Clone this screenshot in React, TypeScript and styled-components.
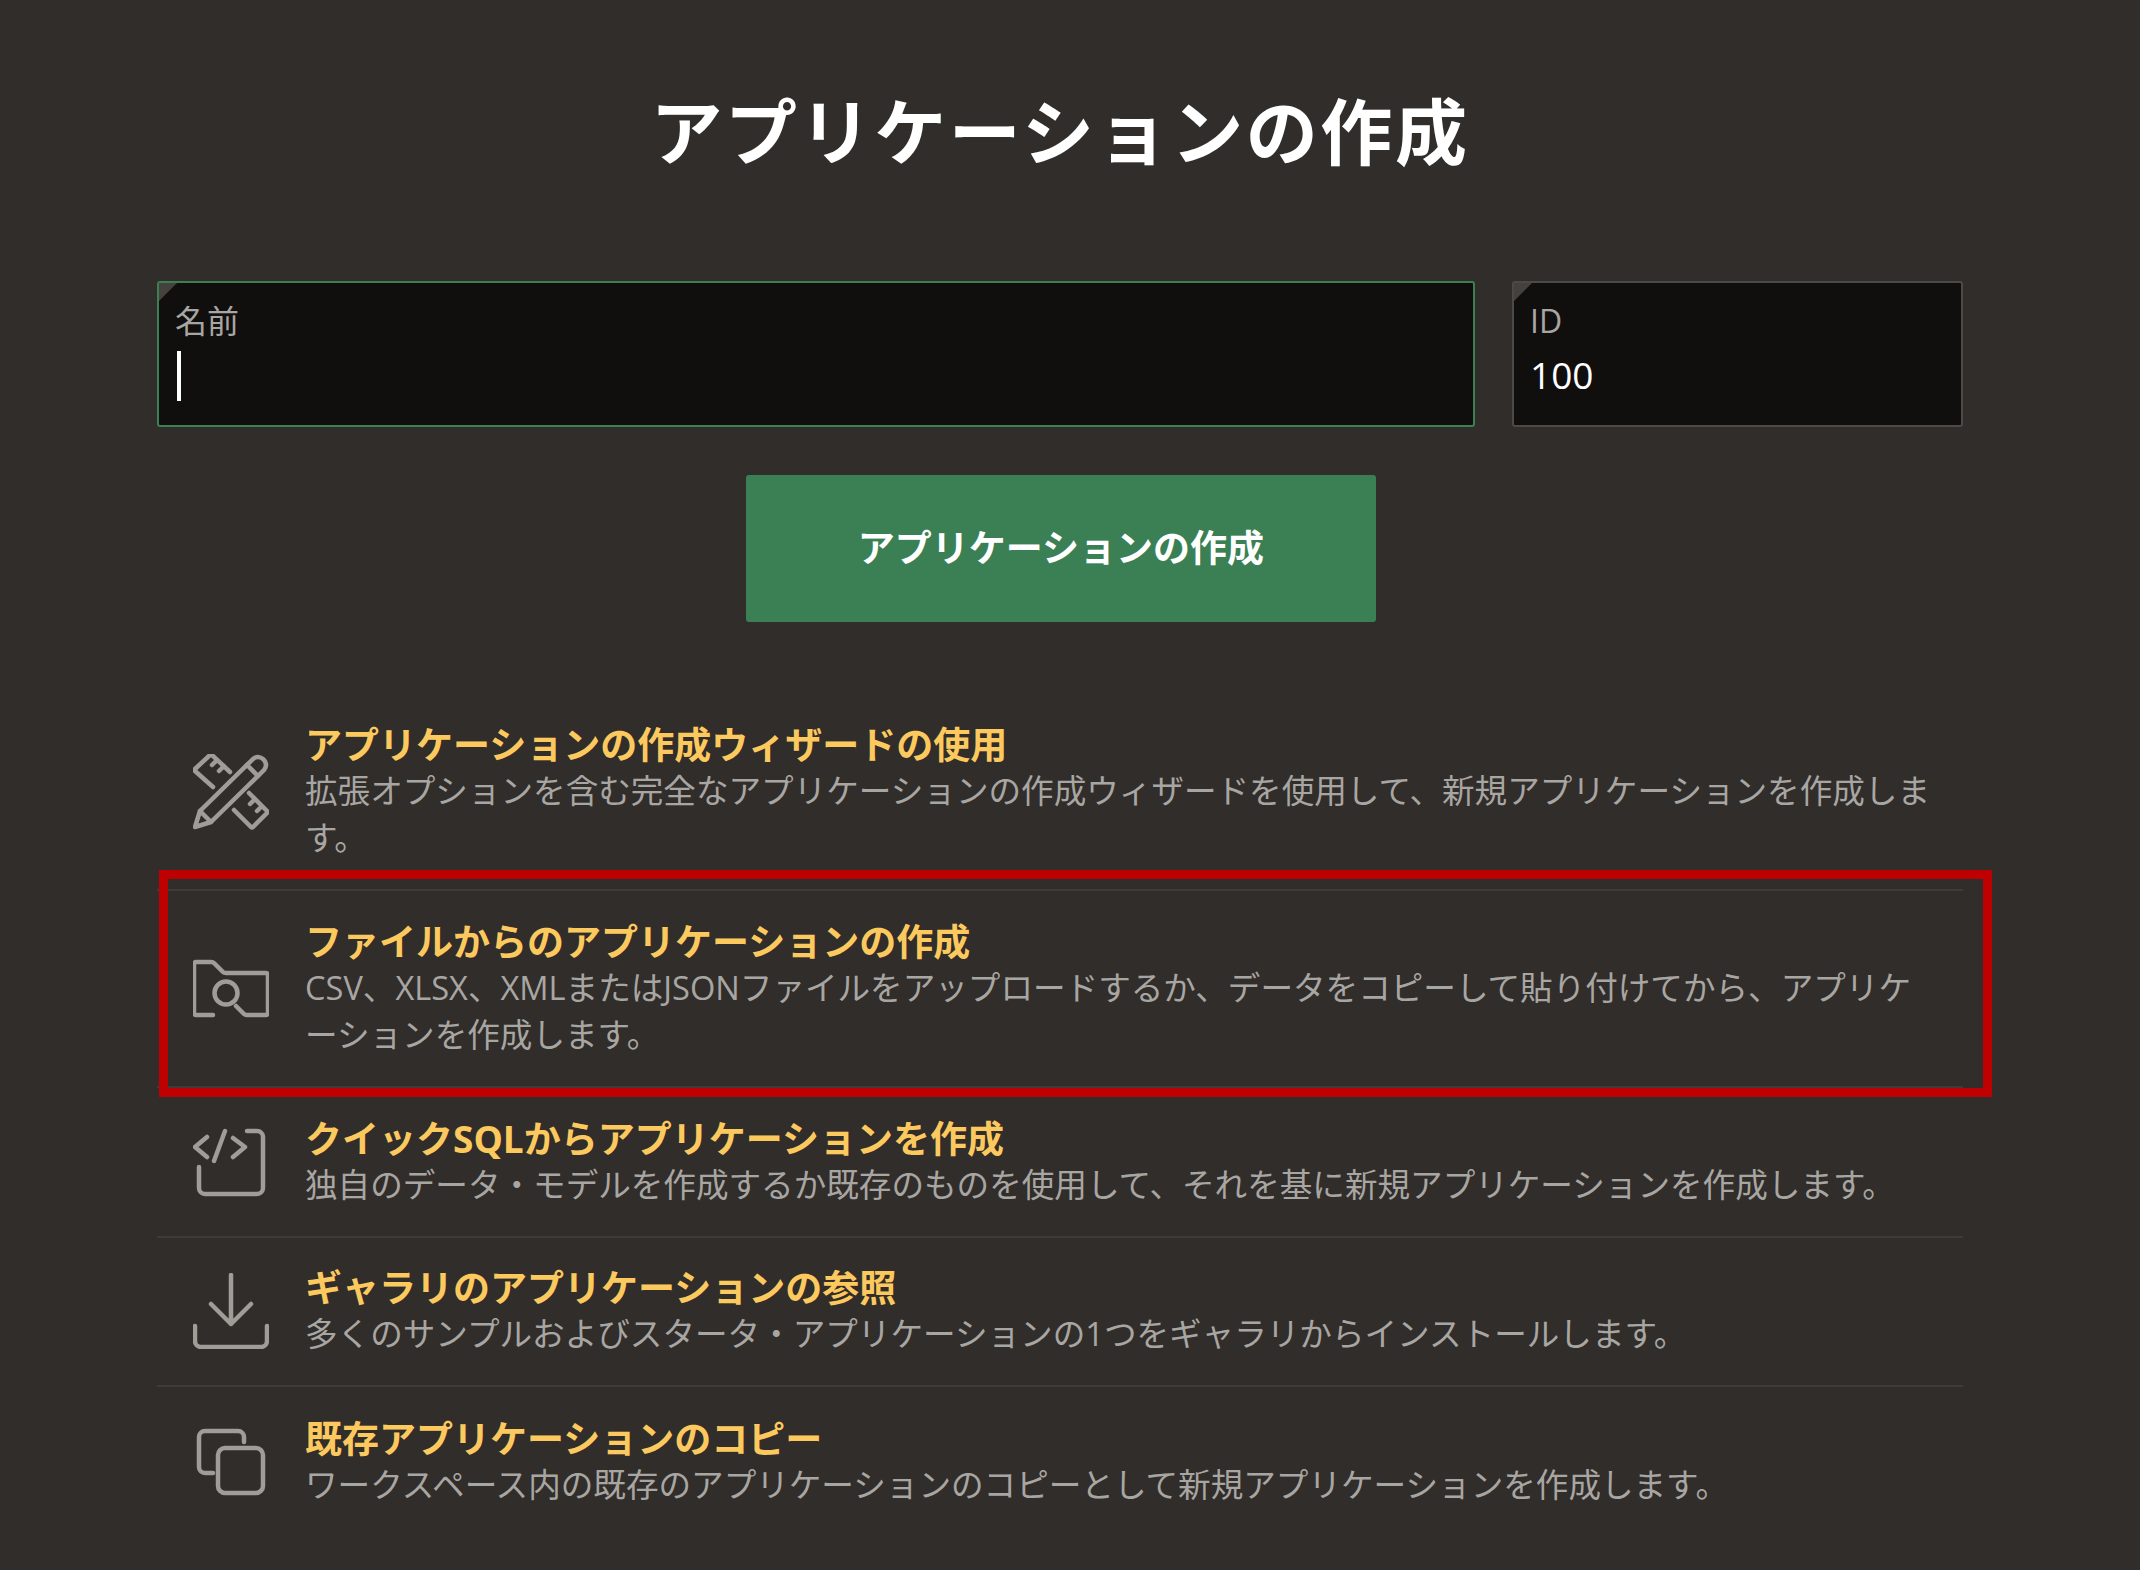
import { createGlobalStyle } from "styled-components";
import styled from "styled-components";
import type { ReactNode } from "react";

const GlobalStyle = createGlobalStyle`
  html, body {
    margin: 0;
    padding: 0;
    background: #312d2a;
  }
  body {
    font-family: "Open Sans", "Noto Sans CJK JP", sans-serif;
  }
`;

interface Action {
  title: string;
  description: string;
  icon: ReactNode;
  tall?: boolean;
}

const actions: Action[] = [
  {
    title: "アプリケーションの作成ウィザードの使用",
    description:
      "拡張オプションを含む完全なアプリケーションの作成ウィザードを使用して、新規アプリケーションを作成します。",
    tall: true,
    icon: (
      <Icon>
        <path d="M2 73l5-16L60 5q5-4 10 0l1 1q4 5 0 10L18 68z" />
        <path d="M7 57l11 11M54 11l11 11" />
        <path d="M20 33L2 17a1.5 1.5 0 0 1 0-2L17 1a1.5 1.5 0 0 1 2 0l18 17M24 6l-5 5M31 12l-5 5" />
        <path d="M41 56l17 17a1.5 1.5 0 0 0 2 0l14-14a1.5 1.5 0 0 0 0-2L56 39M62 45l-5 5M69 52l-5 5" />
      </Icon>
    ),
  },
  {
    title: "ファイルからのアプリケーションの作成",
    description:
      "CSV、XLSX、XMLまたはJSONファイルをアップロードするか、データをコピーして貼り付けてから、アプリケーションを作成します。",
    tall: true,
    icon: (
      <Icon>
        <path d="M20 64H3a2 2 0 0 1-2-2V13a2 2 0 0 1 2-2h15c1 0 2 0 3 1l9 9c1 1 2 1 3 1h40a2 2 0 0 1 2 2v38a2 2 0 0 1-2 2H54c-1 0-2 0-3-1l-8-8" />
        <circle cx="33" cy="42" r="11.5" />
      </Icon>
    ),
  },
  {
    title: "クイックSQLからアプリケーションを作成",
    description:
      "独自のデータ・モデルを作成するか既存のものを使用して、それを基に新規アプリケーションを作成します。",
    icon: (
      <Icon>
        <path d="M54 7h10a6 6 0 0 1 6 6v51a6 6 0 0 1-6 6H12a6 6 0 0 1-6-6V43" />
        <path d="M14 13L2 23l12 10M32 7L21 37M40 14l12 9-12 10" />
      </Icon>
    ),
  },
  {
    title: "ギャラリのアプリケーションの参照",
    description:
      "多くのサンプルおよびスタータ・アプリケーションの1つをギャラリからインストールします。",
    icon: (
      <Icon>
        <path d="M38 2v49M18 31l20 20 20-20" />
        <path d="M2 53v15a6 6 0 0 0 6 6h60a6 6 0 0 0 6-6V53" />
      </Icon>
    ),
  },
  {
    title: "既存アプリケーションのコピー",
    description:
      "ワークスペース内の既存のアプリケーションのコピーとして新規アプリケーションを作成します。",
    icon: (
      <Icon>
        <path d="M20 49h-8a6 6 0 0 1-6-6V13a6 6 0 0 1 6-6h33a6 6 0 0 1 6 6v5" />
        <rect x="25" y="24" width="45" height="45" rx="7" />
      </Icon>
    ),
  },
];

function Icon({ children }: { children: ReactNode }) {
  return (
    <IconSvg viewBox="0 0 76 76" fill="none">
      {children}
    </IconSvg>
  );
}

export default function App() {
  return (
    <Page>
      <GlobalStyle />
      <Title>アプリケーションの作成</Title>

      <Fields>
        <NameField>
          <FieldLabel>名前</FieldLabel>
          <Caret />
        </NameField>
        <IdField>
          <FieldLabel>ID</FieldLabel>
          <FieldValue>100</FieldValue>
        </IdField>
      </Fields>

      <ButtonRow>
        <CreateButton type="button">アプリケーションの作成</CreateButton>
      </ButtonRow>

      <ActionList>
        <Highlight />
        {actions.map((action) => (
          <ActionRow key={action.title} $tall={action.tall}>
            {action.icon}
            <ActionText>
              <ActionTitle>{action.title}</ActionTitle>
              <ActionDescription>{action.description}</ActionDescription>
            </ActionText>
          </ActionRow>
        ))}
      </ActionList>
    </Page>
  );
}

/* ---------------- styled-components ---------------- */

const Page = styled.div`
  box-sizing: border-box;
  width: 2140px;
  height: 1570px;
  padding: 89px 177px 0 157px;
  background: #312d2a;
  overflow: hidden;
`;

const Title = styled.h1`
  margin: 0 0 108px;
  height: 84px;
  font-size: 72px;
  line-height: 84px;
  font-weight: 700;
  letter-spacing: 2.6px;
  text-align: center;
  color: #ffffff;
`;

const Fields = styled.div`
  display: flex;
  gap: 37px;
`;

const FieldBox = styled.div`
  position: relative;
  box-sizing: border-box;
  height: 146px;
  padding: 16px 16px 0;
  background: #100f0e;
  border-radius: 3px;

  &::before {
    content: "";
    position: absolute;
    top: 0;
    left: 0;
    width: 18px;
    height: 18px;
    background: #45413d;
    clip-path: polygon(0 0, 100% 0, 0 100%);
  }
`;

const NameField = styled(FieldBox)`
  flex: 1;
  border: 2px solid #3a8054;
`;

const IdField = styled(FieldBox)`
  width: 451px;
  border: 2px solid #4d4945;
`;

const FieldLabel = styled.div`
  height: 44px;
  font-size: 32px;
  line-height: 44px;
  color: #a8a6a3;
`;

const Caret = styled.div`
  width: 4px;
  height: 50px;
  margin: 8px 0 0 2px;
  background: #ffffff;
`;

const FieldValue = styled.div`
  margin-top: 9px;
  font-size: 37px;
  line-height: 46px;
  color: #ffffff;
`;

const ButtonRow = styled.div`
  display: flex;
  justify-content: center;
  margin: 48px 0 72px 2px;
`;

const CreateButton = styled.button`
  width: 630px;
  height: 147px;
  padding: 0 0 5px;
  border: none;
  border-radius: 3px;
  background: #3a8054;
  color: #ffffff;
  font-family: inherit;
  font-size: 37px;
  font-weight: 700;
`;

const ActionList = styled.div`
  position: relative;
  display: flex;
  flex-direction: column;
`;

const Highlight = styled.div`
  position: absolute;
  top: 176px;
  left: 2px;
  width: 1833px;
  height: 227px;
  box-sizing: border-box;
  border: 9px solid #bf0000;
  z-index: 1;
`;

const ActionRow = styled.div<{ $tall?: boolean }>`
  display: flex;
  align-items: center;
  gap: 36px;
  box-sizing: border-box;
  height: ${(p) => (p.$tall ? "197px" : "149.5px")};
  padding: 0 28px 0 36px;
  border-bottom: 2px solid #3f3b38;

  &:last-child {
    border-bottom: none;
  }
`;

const IconSvg = styled.svg`
  flex: none;
  width: 76px;
  height: 76px;
  stroke: #a09c97;
  stroke-width: 4.5;
  stroke-linecap: round;
  stroke-linejoin: round;
`;

const ActionText = styled.div`
  flex: 1;
  min-width: 0;
`;

const ActionTitle = styled.div`
  font-size: 37px;
  line-height: 46px;
  font-weight: 700;
  color: #fcc95f;
`;

const ActionDescription = styled.div`
  font-size: 32.6px;
  line-height: 46.5px;
  color: #a8a6a3;
  line-break: anywhere;
`;
